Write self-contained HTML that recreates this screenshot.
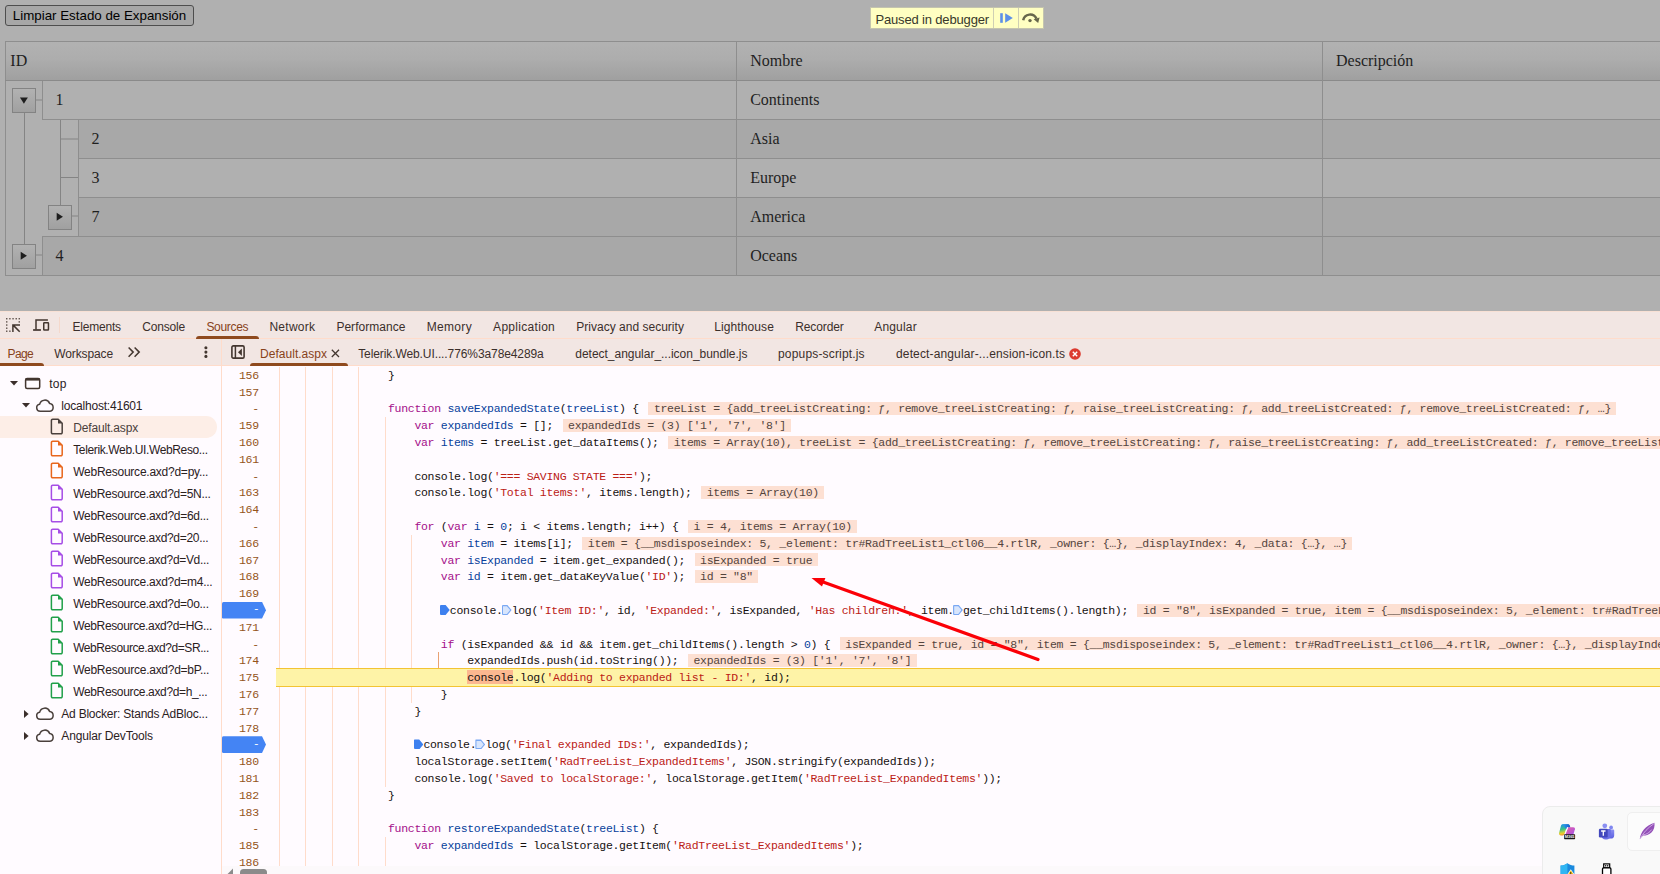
<!DOCTYPE html>
<html lang="es"><head><meta charset="utf-8"><title>Default.aspx - DevTools</title>
<style>
*{box-sizing:border-box}
html,body{margin:0;padding:0}
body{width:1660px;height:874px;overflow:hidden;position:relative;background:#b0b0b0;font-family:"Liberation Sans",sans-serif}
.a{position:absolute;display:block}
.t{position:absolute;white-space:pre;line-height:16px;height:16px}
#page{position:absolute;left:0;top:0;width:1660px;height:311px;background:#b0b0b0;overflow:hidden}
#btn{position:absolute;left:5px;top:5px;width:189px;height:21px;border:1px solid #4e4e4e;border-radius:3px;background:#a7a7a7;color:#000;font:13.333px "Liberation Sans",sans-serif;line-height:19px;text-align:center;white-space:nowrap}
.c{position:absolute;white-space:pre;line-height:18px;font:16px "Liberation Serif",serif;color:#1f1f1f}
.eb{position:absolute;width:24px;height:25px;border:1px solid #838383;background:linear-gradient(#b2b2b2,#a0a0a0)}
#badge{position:absolute;left:870px;top:7px;width:174px;height:22px;background:#ffffc2;border:1px solid #c4c4ae}
#dt{position:absolute;left:0;top:311px;width:1660px;height:563px;background:#fffbff}
.bar{position:absolute;left:0;width:1660px;background:#f2e6e3;border-bottom:1px solid #ffdccb}
.ul{position:absolute;height:3px;background:#8f4a1e;border-radius:3px 3px 0 0}
#side{position:absolute;left:0;top:366px;width:221px;height:508px;background:#fffbff}
#ed{position:absolute;left:222px;top:366px;width:1438px;height:508px;background:#fffbff;overflow:hidden}
.ln{position:absolute;left:222px;width:36.8px;text-align:right;font:11.5px "Liberation Mono",monospace;letter-spacing:-0.3px;line-height:16.8px;height:16.8px;color:#94541a;white-space:pre}
.cl{position:absolute;left:282.4px;font:11.5px "Liberation Mono",monospace;letter-spacing:-0.3px;line-height:16.8px;height:16.8px;color:#15100f;white-space:pre}
.k{color:#a40f8a}.d{color:#073f9c}.s{color:#bb2016}.n{color:#073f9c}
.v{color:#54443d;margin-left:9.6px;padding:0 5.4px}.vb{position:absolute;height:13.1px;background:#fde0d3}.hb{position:absolute;height:13.6px;background:#fcb890}

.exec{position:absolute;left:276px;width:1400px;height:19px;background:#fef3a7;border-top:1px solid #f3c433;border-bottom:1px solid #f3c433}
.g{position:absolute;width:1px;background:#ffdccb}.ga{background:#e9a273}
.bpm{position:absolute;left:222px;width:44px;height:16.8px;background:#4484f4;border-radius:1.5px;clip-path:polygon(0 0,40px 0,44px 50%,40px 100%,0 100%);color:#fff;font:11px "Liberation Mono",monospace;line-height:15.6px}
.bpm span{position:absolute;right:6.4px;top:0.4px}
.b1,.b2{display:inline-block;width:9px;height:10px;vertical-align:top;margin-top:2.1px;position:relative}
.b1:before,.b2:before{content:"";position:absolute;left:-0.9px;top:0;width:9.8px;height:10px;clip-path:polygon(0 0,58% 0,100% 50%,58% 100%,0 100%);background:#3d80ef;border-radius:1px}
.b2:before{background:#7aa8f3}
.b2:after{content:"";position:absolute;left:0.2px;top:1.1px;width:7.3px;height:7.8px;clip-path:polygon(0 0,56% 0,100% 50%,56% 100%,0 100%);background:#d8e5fc}
</style></head><body>
<div id="page">
<div id="btn">Limpiar Estado de Expansión</div>
<div class="a" style="left:5px;top:41px;width:1655px;height:40px;background:linear-gradient(#b2b2b2 0%,#adadad 45%,#9f9f9f 100%);"></div>
<div class="a" style="left:79px;top:120px;width:1581px;height:39px;background:#a8a8a8;"></div>
<div class="a" style="left:79px;top:198px;width:1581px;height:39px;background:#a8a8a8;"></div>
<div class="a" style="left:43px;top:237px;width:1617px;height:39px;background:#a8a8a8;"></div>
<div class="a" style="left:5px;top:41px;width:1655px;height:1px;background:#8e8e8e;"></div>
<div class="a" style="left:5px;top:41px;width:1px;height:235px;background:#8e8e8e;"></div>
<div class="a" style="left:5px;top:275px;width:1655px;height:1px;background:#8e8e8e;"></div>
<div class="a" style="left:5px;top:80px;width:1655px;height:1px;background:#8a8a8a;"></div>
<div class="a" style="left:42px;top:119px;width:1618px;height:1px;background:#8e8e8e;"></div>
<div class="a" style="left:78px;top:158px;width:1582px;height:1px;background:#8e8e8e;"></div>
<div class="a" style="left:78px;top:197px;width:1582px;height:1px;background:#8e8e8e;"></div>
<div class="a" style="left:42px;top:236px;width:1618px;height:1px;background:#8e8e8e;"></div>
<div class="a" style="left:42px;top:81px;width:1px;height:39px;background:#8e8e8e;"></div>
<div class="a" style="left:78px;top:120px;width:1px;height:117px;background:#8e8e8e;"></div>
<div class="a" style="left:42px;top:237px;width:1px;height:39px;background:#8e8e8e;"></div>
<div class="a" style="left:736px;top:42px;width:1px;height:234px;background:#8e8e8e;"></div>
<div class="a" style="left:1322px;top:42px;width:1px;height:234px;background:#8e8e8e;"></div>
<div class="a" style="left:24px;top:113px;width:1px;height:132px;background:#848484;"></div>
<div class="a" style="left:60px;top:120px;width:1px;height:86px;background:#848484;"></div>
<div class="a" style="left:36px;top:99px;width:6px;height:2px;background:#9a9a9a;"></div>
<div class="a" style="left:61px;top:138px;width:17px;height:2px;background:#9a9a9a;"></div>
<div class="a" style="left:61px;top:177px;width:17px;height:1px;background:#848484;"></div>
<div class="a" style="left:72px;top:215px;width:6px;height:2px;background:#9a9a9a;"></div>
<div class="a" style="left:36px;top:254px;width:6px;height:2px;background:#9a9a9a;"></div>
<div class="eb" style="left:12px;top:88px"><svg width="22" height="22" viewBox="0 0 24 24" style="position:absolute;left:0;top:0"><path d="M7.6 9.4h8.6l-4.3 6.6z" fill="#1e1e1e"/></svg></div>
<div class="eb" style="left:48px;top:205px"><svg width="22" height="22" viewBox="0 0 24 24" style="position:absolute;left:0;top:0"><path d="M8.4 7.4v8.8l6.8-4.4z" fill="#1e1e1e"/></svg></div>
<div class="eb" style="left:12px;top:244px"><svg width="22" height="22" viewBox="0 0 24 24" style="position:absolute;left:0;top:0"><path d="M8.4 7.4v8.8l6.8-4.4z" fill="#1e1e1e"/></svg></div>
<span class="c" style="left:10.3px;top:51.7px">ID</span>
<span class="c" style="left:750.2px;top:51.7px">Nombre</span>
<span class="c" style="left:1336px;top:51.7px">Descripción</span>
<span class="c" style="left:55.5px;top:90.5px">1</span>
<span class="c" style="left:750.2px;top:90.5px">Continents</span>
<span class="c" style="left:91.5px;top:129.5px">2</span>
<span class="c" style="left:750.2px;top:129.5px">Asia</span>
<span class="c" style="left:91.5px;top:168.5px">3</span>
<span class="c" style="left:750.2px;top:168.5px">Europe</span>
<span class="c" style="left:91.5px;top:207.5px">7</span>
<span class="c" style="left:750.2px;top:207.5px">America</span>
<span class="c" style="left:55.5px;top:246.5px">4</span>
<span class="c" style="left:750.2px;top:246.5px">Oceans</span>
<div id="badge"><div class="a" style="left:122px;top:0;width:1px;height:20px;background:#cfcfb4"></div><div class="a" style="left:147px;top:0;width:1px;height:20px;background:#cfcfb4"></div>
<svg class="a" style="left:127.6px;top:3.6px" width="16" height="12" viewBox="0 0 16 12"><rect x="1.2" y="1.2" width="2.6" height="9.6" fill="#5b8fe8"/><path d="M6.2 1.2v9.6l7.6-4.8z" fill="#5b8fe8"/></svg>
<svg class="a" style="left:150px;top:3.8px" width="20" height="12" viewBox="0 0 20 12"><path d="M2.2 8.2a7 7 0 0 1 13.2-1.6" fill="none" stroke="#67674c" stroke-width="2.5"/><path d="M12.6 7.2l6-1.6-1.4 5.4z" fill="#67674c"/><circle cx="9" cy="8.6" r="1.7" fill="#67674c"/></svg></div>
</div>
<div id="dt">
<div class="bar" style="top:0;height:28px;border-top:1px solid #f8e0d4"></div>
<div class="bar" style="top:28px;height:27px"></div>
</div>
<div id="side"></div>
<div id="ed"></div>
<svg class="a" style="left:0;top:312px" width="60" height="26" viewBox="0 312 60 26"><g fill="#43362f"><rect x="6.10" y="318.1" width="1.3" height="1.3"/><rect x="9.25" y="318.1" width="1.3" height="1.3"/><rect x="12.40" y="318.1" width="1.3" height="1.3"/><rect x="15.55" y="318.1" width="1.3" height="1.3"/><rect x="18.60" y="318.1" width="1.3" height="1.3"/><rect x="6.1" y="321.25" width="1.3" height="1.3"/><rect x="6.1" y="324.40" width="1.3" height="1.3"/><rect x="6.1" y="327.55" width="1.3" height="1.3"/><rect x="6.1" y="330.55" width="1.3" height="1.3"/><rect x="18.6" y="321.25" width="1.3" height="1.3"/><rect x="9.25" y="330.55" width="1.3" height="1.3"/></g><path d="M20 324.9H12.9V331.9M12.9 324.9l6.8 6.8" fill="none" stroke="#43362f" stroke-width="1.5"/><path d="M47.9 319.9H36V329.4" fill="none" stroke="#43362f" stroke-width="1.5"/><path d="M33.1 330H40.9" stroke="#43362f" stroke-width="1.7"/><rect x="43.75" y="322.85" width="4.7" height="7.2" rx="0.5" fill="none" stroke="#43362f" stroke-width="1.5"/></svg>
<div class="a" style="left:59px;top:317px;width:1px;height:16px;background:#f5d9cc"></div>
<div class="ul" style="left:196px;top:336px;width:62.5px"></div>
<div class="ul" style="left:0;top:363px;width:44px;border-radius:0 3px 0 0"></div>
<div class="ul" style="left:250px;top:363px;width:98px"></div>
<svg class="a" style="left:127px;top:346px" width="15" height="12" viewBox="127 346 15 12"><path d="M128.6 347.5l4.6 4.6-4.6 4.6M134.6 347.5l4.6 4.6-4.6 4.6" fill="none" stroke="#43362f" stroke-width="1.5"/></svg>
<svg class="a" style="left:203px;top:345px" width="6" height="14" viewBox="203 345 6 14"><g fill="#43362f"><circle cx="205.9" cy="347.8" r="1.55"/><circle cx="205.9" cy="352.1" r="1.55"/><circle cx="205.9" cy="356.4" r="1.55"/></g></svg>
<div class="a" style="left:221px;top:339px;width:1px;height:535px;background:#ffdccb"></div>
<svg class="a" style="left:231px;top:345px" width="14" height="14" viewBox="0 0 14 14"><rect x="0.9" y="0.9" width="12.2" height="12.2" rx="1.4" fill="none" stroke="#43362f" stroke-width="1.6"/><path d="M4.4 0.9v12.2" stroke="#43362f" stroke-width="1.5"/><path d="M10.9 3.5v7.4L7 7.2z" fill="#43362f"/></svg>
<svg class="a" style="left:330.7px;top:348.6px" width="9" height="9" viewBox="0 0 9 9"><path d="M0.8 0.8l7.2 7.2M8 0.8L0.8 8" stroke="#43362f" stroke-width="1.25"/></svg>
<svg class="a" style="left:1069.2px;top:348px" width="12" height="12" viewBox="0 0 12 12"><circle cx="6" cy="6" r="5.8" fill="#dc3a2f"/><path d="M3.8 3.8l4.4 4.4M8.2 3.8L3.8 8.2" stroke="#fff" stroke-width="1.4"/></svg>
<div class="a" style="left:0;top:416px;width:216.5px;height:21.5px;background:#fdeee7;border-radius:0 10.75px 10.75px 0"></div>
<div class="g" style="left:279px;top:366.6px;height:499.4px"></div>
<div class="g" style="left:305px;top:366.6px;height:499.4px"></div>
<div class="g" style="left:332px;top:366.6px;height:499.4px"></div>
<div class="g" style="left:358px;top:366.6px;height:499.4px"></div>
<div class="g" style="left:385px;top:417.0px;height:369.6px"></div>
<div class="g" style="left:385px;top:837.0px;height:29.0px"></div>
<div class="g" style="left:411px;top:534.6px;height:168.0px"></div>
<div class="g ga" style="left:438px;top:652.2px;height:16.8px"></div>
<div class="a" style="left:222px;top:866px;width:1438px;height:8px;background:#fcf9fb"></div>
<svg class="a" style="left:226px;top:868px" width="8" height="6" viewBox="0 0 8 6"><path d="M7 0.4v6H1.2z" fill="#8b8b8b"/></svg>
<div class="a" style="left:240px;top:869px;width:27px;height:8px;background:#8b8b8b;border-radius:3.5px"></div>
<svg class="a" style="left:10.3px;top:381.0px" width="8" height="5" viewBox="0 0 8 5"><path d="M0 0h8L4 4.6z" fill="#3b2f2b"/></svg>
<svg class="a" style="left:24.4px;top:376.9px" width="18" height="13" viewBox="0 0 18 13"><rect x="1.6" y="1.6" width="14.1" height="10" rx="1.5" fill="none" stroke="#43362f" stroke-width="1.5"/><rect x="1.6" y="1.4" width="14.1" height="2.2" fill="#43362f"/></svg>
<svg class="a" style="left:22.4px;top:403.0px" width="8" height="5" viewBox="0 0 8 5"><path d="M0 0h8L4 4.6z" fill="#3b2f2b"/></svg>
<svg class="a" style="left:34.6px;top:398.5px" width="20" height="14" viewBox="0 0 20 14"><path d="M5.2 12.3a3.6 3.6 0 0 1-.5-7.15A5.2 5.2 0 0 1 14.6 4.4a4 4 0 0 1 .3 7.9z" fill="none" stroke="#4a403c" stroke-width="1.5" stroke-linejoin="round"/></svg>
<svg class="a" style="left:50px;top:418.1px" width="14" height="17" viewBox="0 0 14 17"><path d="M2.6 1.3h5.6l4 4v9.3a1.2 1.2 0 0 1-1.2 1.2H2.6a1.2 1.2 0 0 1-1.2-1.2V2.5a1.2 1.2 0 0 1 1.2-1.2z" fill="none" stroke="#4a403c" stroke-width="1.5" stroke-linejoin="round"/><path d="M8 1.3v4.2h4.2z" fill="#4a403c"/></svg>
<svg class="a" style="left:50px;top:440.1px" width="14" height="17" viewBox="0 0 14 17"><path d="M2.6 1.3h5.6l4 4v9.3a1.2 1.2 0 0 1-1.2 1.2H2.6a1.2 1.2 0 0 1-1.2-1.2V2.5a1.2 1.2 0 0 1 1.2-1.2z" fill="none" stroke="#e8661c" stroke-width="1.5" stroke-linejoin="round"/><path d="M8 1.3v4.2h4.2z" fill="#e8661c"/></svg>
<svg class="a" style="left:50px;top:462.1px" width="14" height="17" viewBox="0 0 14 17"><path d="M2.6 1.3h5.6l4 4v9.3a1.2 1.2 0 0 1-1.2 1.2H2.6a1.2 1.2 0 0 1-1.2-1.2V2.5a1.2 1.2 0 0 1 1.2-1.2z" fill="none" stroke="#e8661c" stroke-width="1.5" stroke-linejoin="round"/><path d="M8 1.3v4.2h4.2z" fill="#e8661c"/></svg>
<svg class="a" style="left:50px;top:484.1px" width="14" height="17" viewBox="0 0 14 17"><path d="M2.6 1.3h5.6l4 4v9.3a1.2 1.2 0 0 1-1.2 1.2H2.6a1.2 1.2 0 0 1-1.2-1.2V2.5a1.2 1.2 0 0 1 1.2-1.2z" fill="none" stroke="#a64de6" stroke-width="1.5" stroke-linejoin="round"/><path d="M8 1.3v4.2h4.2z" fill="#a64de6"/></svg>
<svg class="a" style="left:50px;top:506.1px" width="14" height="17" viewBox="0 0 14 17"><path d="M2.6 1.3h5.6l4 4v9.3a1.2 1.2 0 0 1-1.2 1.2H2.6a1.2 1.2 0 0 1-1.2-1.2V2.5a1.2 1.2 0 0 1 1.2-1.2z" fill="none" stroke="#a64de6" stroke-width="1.5" stroke-linejoin="round"/><path d="M8 1.3v4.2h4.2z" fill="#a64de6"/></svg>
<svg class="a" style="left:50px;top:528.1px" width="14" height="17" viewBox="0 0 14 17"><path d="M2.6 1.3h5.6l4 4v9.3a1.2 1.2 0 0 1-1.2 1.2H2.6a1.2 1.2 0 0 1-1.2-1.2V2.5a1.2 1.2 0 0 1 1.2-1.2z" fill="none" stroke="#a64de6" stroke-width="1.5" stroke-linejoin="round"/><path d="M8 1.3v4.2h4.2z" fill="#a64de6"/></svg>
<svg class="a" style="left:50px;top:550.1px" width="14" height="17" viewBox="0 0 14 17"><path d="M2.6 1.3h5.6l4 4v9.3a1.2 1.2 0 0 1-1.2 1.2H2.6a1.2 1.2 0 0 1-1.2-1.2V2.5a1.2 1.2 0 0 1 1.2-1.2z" fill="none" stroke="#a64de6" stroke-width="1.5" stroke-linejoin="round"/><path d="M8 1.3v4.2h4.2z" fill="#a64de6"/></svg>
<svg class="a" style="left:50px;top:572.1px" width="14" height="17" viewBox="0 0 14 17"><path d="M2.6 1.3h5.6l4 4v9.3a1.2 1.2 0 0 1-1.2 1.2H2.6a1.2 1.2 0 0 1-1.2-1.2V2.5a1.2 1.2 0 0 1 1.2-1.2z" fill="none" stroke="#a64de6" stroke-width="1.5" stroke-linejoin="round"/><path d="M8 1.3v4.2h4.2z" fill="#a64de6"/></svg>
<svg class="a" style="left:50px;top:594.1px" width="14" height="17" viewBox="0 0 14 17"><path d="M2.6 1.3h5.6l4 4v9.3a1.2 1.2 0 0 1-1.2 1.2H2.6a1.2 1.2 0 0 1-1.2-1.2V2.5a1.2 1.2 0 0 1 1.2-1.2z" fill="none" stroke="#21a04a" stroke-width="1.5" stroke-linejoin="round"/><path d="M8 1.3v4.2h4.2z" fill="#21a04a"/></svg>
<svg class="a" style="left:50px;top:616.1px" width="14" height="17" viewBox="0 0 14 17"><path d="M2.6 1.3h5.6l4 4v9.3a1.2 1.2 0 0 1-1.2 1.2H2.6a1.2 1.2 0 0 1-1.2-1.2V2.5a1.2 1.2 0 0 1 1.2-1.2z" fill="none" stroke="#21a04a" stroke-width="1.5" stroke-linejoin="round"/><path d="M8 1.3v4.2h4.2z" fill="#21a04a"/></svg>
<svg class="a" style="left:50px;top:638.1px" width="14" height="17" viewBox="0 0 14 17"><path d="M2.6 1.3h5.6l4 4v9.3a1.2 1.2 0 0 1-1.2 1.2H2.6a1.2 1.2 0 0 1-1.2-1.2V2.5a1.2 1.2 0 0 1 1.2-1.2z" fill="none" stroke="#21a04a" stroke-width="1.5" stroke-linejoin="round"/><path d="M8 1.3v4.2h4.2z" fill="#21a04a"/></svg>
<svg class="a" style="left:50px;top:660.1px" width="14" height="17" viewBox="0 0 14 17"><path d="M2.6 1.3h5.6l4 4v9.3a1.2 1.2 0 0 1-1.2 1.2H2.6a1.2 1.2 0 0 1-1.2-1.2V2.5a1.2 1.2 0 0 1 1.2-1.2z" fill="none" stroke="#21a04a" stroke-width="1.5" stroke-linejoin="round"/><path d="M8 1.3v4.2h4.2z" fill="#21a04a"/></svg>
<svg class="a" style="left:50px;top:682.1px" width="14" height="17" viewBox="0 0 14 17"><path d="M2.6 1.3h5.6l4 4v9.3a1.2 1.2 0 0 1-1.2 1.2H2.6a1.2 1.2 0 0 1-1.2-1.2V2.5a1.2 1.2 0 0 1 1.2-1.2z" fill="none" stroke="#21a04a" stroke-width="1.5" stroke-linejoin="round"/><path d="M8 1.3v4.2h4.2z" fill="#21a04a"/></svg>
<svg class="a" style="left:24px;top:709.5px" width="5" height="8" viewBox="0 0 5 8"><path d="M0 0v8L4.6 4z" fill="#3b2f2b"/></svg>
<svg class="a" style="left:34.6px;top:706.5px" width="20" height="14" viewBox="0 0 20 14"><path d="M5.2 12.3a3.6 3.6 0 0 1-.5-7.15A5.2 5.2 0 0 1 14.6 4.4a4 4 0 0 1 .3 7.9z" fill="none" stroke="#4a403c" stroke-width="1.5" stroke-linejoin="round"/></svg>
<svg class="a" style="left:24px;top:731.5px" width="5" height="8" viewBox="0 0 5 8"><path d="M0 0v8L4.6 4z" fill="#3b2f2b"/></svg>
<svg class="a" style="left:34.6px;top:728.5px" width="20" height="14" viewBox="0 0 20 14"><path d="M5.2 12.3a3.6 3.6 0 0 1-.5-7.15A5.2 5.2 0 0 1 14.6 4.4a4 4 0 0 1 .3 7.9z" fill="none" stroke="#4a403c" stroke-width="1.5" stroke-linejoin="round"/></svg>
<div class="ln" style="top:367.8px">156</div>
<div class="cl" style="top:367.8px">                }</div>
<div class="ln" style="top:384.6px">157</div>
<div class="ln" style="top:401.4px">-</div>
<div class="vb" style="left:648.4px;top:402.2px;width:967.8px"></div>
<div class="cl" style="top:401.4px">                <span class="k">function</span> <span class="d">saveExpandedState</span>(<span class="d">treeList</span>) {<span class="v">treeList = {add_treeListCreating: ƒ, remove_treeListCreating: ƒ, raise_treeListCreating: ƒ, add_treeListCreated: ƒ, remove_treeListCreated: ƒ, …}</span></div>
<div class="ln" style="top:418.1px">159</div>
<div class="vb" style="left:562.6px;top:419.0px;width:228.6px"></div>
<div class="cl" style="top:418.1px">                    <span class="k">var</span> <span class="d">expandedIds</span> = [];<span class="v">expandedIds = (3) ['1', '7', '8']</span></div>
<div class="ln" style="top:434.9px">160</div>
<div class="vb" style="left:668.2px;top:435.8px;width:1093.2px"></div>
<div class="cl" style="top:434.9px">                    <span class="k">var</span> <span class="d">items</span> = treeList.get_dataItems();<span class="v">items = Array(10), treeList = {add_treeListCreating: ƒ, remove_treeListCreating: ƒ, raise_treeListCreating: ƒ, add_treeListCreated: ƒ, remove_treeListCreated: ƒ, …}</span></div>
<div class="ln" style="top:451.8px">161</div>
<div class="ln" style="top:468.6px">-</div>
<div class="cl" style="top:468.6px">                    console.log(<span class="s">'=== SAVING STATE ==='</span>);</div>
<div class="ln" style="top:485.4px">163</div>
<div class="vb" style="left:701.2px;top:486.2px;width:123.0px"></div>
<div class="cl" style="top:485.4px">                    console.log(<span class="s">'Total items:'</span>, items.length);<span class="v">items = Array(10)</span></div>
<div class="ln" style="top:502.1px">164</div>
<div class="ln" style="top:519.0px">-</div>
<div class="vb" style="left:688.0px;top:519.8px;width:169.2px"></div>
<div class="cl" style="top:519.0px">                    <span class="k">for</span> (<span class="k">var</span> <span class="d">i</span> = <span class="n">0</span>; i &lt; items.length; i++) {<span class="v">i = 4, items = Array(10)</span></div>
<div class="ln" style="top:535.8px">166</div>
<div class="vb" style="left:582.4px;top:536.6px;width:769.8px"></div>
<div class="cl" style="top:535.8px">                        <span class="k">var</span> <span class="d">item</span> = items[i];<span class="v">item = {__msdisposeindex: 5, _element: tr#RadTreeList1_ctl06__4.rtlR, _owner: {…}, _displayIndex: 4, _data: {…}, …}</span></div>
<div class="ln" style="top:552.5px">167</div>
<div class="vb" style="left:694.6px;top:553.4px;width:123.0px"></div>
<div class="cl" style="top:552.5px">                        <span class="k">var</span> <span class="d">isExpanded</span> = item.get_expanded();<span class="v">isExpanded = true</span></div>
<div class="ln" style="top:569.4px">168</div>
<div class="vb" style="left:694.6px;top:570.2px;width:63.6px"></div>
<div class="cl" style="top:569.4px">                        <span class="k">var</span> <span class="d">id</span> = item.get_dataKeyValue(<span class="s">'ID'</span>);<span class="v">id = "8"</span></div>
<div class="ln" style="top:586.1px">169</div>
<div class="bpm" style="top:601.8px"><span>-</span></div>
<div class="vb" style="left:1137.4px;top:603.8px;width:961.2px"></div>
<div class="cl" style="top:603.0px">                        <i class="b1"></i>console.<i class="b2"></i>log(<span class="s">'Item ID:'</span>, id, <span class="s">'Expanded:'</span>, isExpanded, <span class="s">'Has children:'</span>, item.<i class="b2"></i>get_childItems().length);<span class="v">id = "8", isExpanded = true, item = {__msdisposeindex: 5, _element: tr#RadTreeList1_ctl06__4.rtlR, _owner: {…}, _displayIndex: 4, _data: {…}, …}</span></div>
<div class="ln" style="top:619.8px">171</div>
<div class="ln" style="top:636.5px">-</div>
<div class="vb" style="left:839.8px;top:637.4px;width:961.2px"></div>
<div class="cl" style="top:636.5px">                        <span class="k">if</span> (isExpanded &amp;&amp; id &amp;&amp; item.get_childItems().length &gt; <span class="n">0</span>) {<span class="v">isExpanded = true, id = "8", item = {__msdisposeindex: 5, _element: tr#RadTreeList1_ctl06__4.rtlR, _owner: {…}, _displayIndex: 4, _data: {…}, …}</span></div>
<div class="ln" style="top:653.4px">174</div>
<div class="vb" style="left:688.0px;top:654.2px;width:228.6px"></div>
<div class="cl" style="top:653.4px">                            expandedIds.push(id.toString());<span class="v">expandedIds = (3) ['1', '7', '8']</span></div>
<div class="ln" style="top:670.2px">175</div>
<div class="exec" style="top:668px"></div>
<div class="hb" style="left:467.2px;top:670.2px;width:46.2px"></div>
<div class="cl" style="top:670.2px">                            console.log(<span class="s">'Adding to expanded list - ID:'</span>, id);</div>
<div class="ln" style="top:687.0px">176</div>
<div class="cl" style="top:687.0px">                        }</div>
<div class="ln" style="top:703.8px">177</div>
<div class="cl" style="top:703.8px">                    }</div>
<div class="ln" style="top:720.5px">178</div>
<div class="bpm" style="top:736.2px"><span>-</span></div>
<div class="cl" style="top:737.4px">                    <i class="b1"></i>console.<i class="b2"></i>log(<span class="s">'Final expanded IDs:'</span>, expandedIds);</div>
<div class="ln" style="top:754.2px">180</div>
<div class="cl" style="top:754.2px">                    localStorage.setItem(<span class="s">'RadTreeList_ExpandedItems'</span>, JSON.stringify(expandedIds));</div>
<div class="ln" style="top:771.0px">181</div>
<div class="cl" style="top:771.0px">                    console.log(<span class="s">'Saved to localStorage:'</span>, localStorage.getItem(<span class="s">'RadTreeList_ExpandedItems'</span>));</div>
<div class="ln" style="top:787.8px">182</div>
<div class="cl" style="top:787.8px">                }</div>
<div class="ln" style="top:804.5px">183</div>
<div class="ln" style="top:821.4px">-</div>
<div class="cl" style="top:821.4px">                <span class="k">function</span> <span class="d">restoreExpandedState</span>(<span class="d">treeList</span>) {</div>
<div class="ln" style="top:838.2px">185</div>
<div class="cl" style="top:838.2px">                    <span class="k">var</span> <span class="d">expandedIds</span> = localStorage.getItem(<span class="s">'RadTreeList_ExpandedItems'</span>);</div>
<div class="ln" style="top:855.0px">186</div>
<span class="t " style="left:72.4px;top:319.6px;color:#3b2f2b;font:12px 'Liberation Sans',sans-serif;letter-spacing:-0.191px">Elements</span>
<span class="t " style="left:142.2px;top:319.6px;color:#3b2f2b;font:12px 'Liberation Sans',sans-serif;letter-spacing:-0.162px">Console</span>
<span class="t " style="left:206.4px;top:319.6px;color:#87421a;font:12px 'Liberation Sans',sans-serif;letter-spacing:-0.319px">Sources</span>
<span class="t " style="left:269.4px;top:319.6px;color:#3b2f2b;font:12px 'Liberation Sans',sans-serif;letter-spacing:0.283px">Network</span>
<span class="t " style="left:336.4px;top:319.6px;color:#3b2f2b;font:12px 'Liberation Sans',sans-serif;letter-spacing:0.027px">Performance</span>
<span class="t " style="left:426.7px;top:319.6px;color:#3b2f2b;font:12px 'Liberation Sans',sans-serif;letter-spacing:0.326px">Memory</span>
<span class="t " style="left:493.1px;top:319.6px;color:#3b2f2b;font:12px 'Liberation Sans',sans-serif;letter-spacing:0.298px">Application</span>
<span class="t " style="left:576.3px;top:319.6px;color:#3b2f2b;font:12px 'Liberation Sans',sans-serif;letter-spacing:0.011px">Privacy and security</span>
<span class="t " style="left:714.2px;top:319.6px;color:#3b2f2b;font:12px 'Liberation Sans',sans-serif;letter-spacing:0.108px">Lighthouse</span>
<span class="t " style="left:795.2px;top:319.6px;color:#3b2f2b;font:12px 'Liberation Sans',sans-serif;letter-spacing:-0.107px">Recorder</span>
<span class="t " style="left:874.2px;top:319.6px;color:#3b2f2b;font:12px 'Liberation Sans',sans-serif;letter-spacing:0.189px">Angular</span>
<span class="t " style="left:7.5px;top:347.3px;color:#87421a;font:12px 'Liberation Sans',sans-serif;letter-spacing:-0.583px">Page</span>
<span class="t " style="left:54.3px;top:347.3px;color:#3b2f2b;font:12px 'Liberation Sans',sans-serif;letter-spacing:-0.124px">Workspace</span>
<span class="t " style="left:260.1px;top:347.3px;color:#87421a;font:12px 'Liberation Sans',sans-serif;letter-spacing:0.016px">Default.aspx</span>
<span class="t " style="left:358.2px;top:347.3px;color:#3b2f2b;font:12px 'Liberation Sans',sans-serif;letter-spacing:-0.096px">Telerik.Web.UI....776%3a78e4289a</span>
<span class="t " style="left:575.3px;top:347.3px;color:#3b2f2b;font:12px 'Liberation Sans',sans-serif;letter-spacing:-0.022px">detect_angular_...icon_bundle.js</span>
<span class="t " style="left:778.0px;top:347.3px;color:#3b2f2b;font:12px 'Liberation Sans',sans-serif;letter-spacing:0.172px">popups-script.js</span>
<span class="t " style="left:896.0px;top:347.3px;color:#3b2f2b;font:12px 'Liberation Sans',sans-serif;letter-spacing:0.139px">detect-angular-...ension-icon.ts</span>
<span class="t " style="left:49.2px;top:377.2px;color:#2b211e;font:12px 'Liberation Sans',sans-serif;letter-spacing:0.304px">top</span>
<span class="t " style="left:61.3px;top:399.2px;color:#2b211e;font:12px 'Liberation Sans',sans-serif;letter-spacing:-0.205px">localhost:41601</span>
<span class="t " style="left:73.2px;top:421.2px;color:#4a403c;font:12px 'Liberation Sans',sans-serif;letter-spacing:-0.159px">Default.aspx</span>
<span class="t " style="left:73.2px;top:443.2px;color:#2b211e;font:12px 'Liberation Sans',sans-serif;letter-spacing:-0.360px">Telerik.Web.UI.WebReso...</span>
<span class="t " style="left:73.2px;top:465.2px;color:#2b211e;font:12px 'Liberation Sans',sans-serif;letter-spacing:-0.245px">WebResource.axd?d=py...</span>
<span class="t " style="left:73.2px;top:487.2px;color:#2b211e;font:12px 'Liberation Sans',sans-serif;letter-spacing:-0.300px">WebResource.axd?d=5N...</span>
<span class="t " style="left:73.2px;top:509.2px;color:#2b211e;font:12px 'Liberation Sans',sans-serif;letter-spacing:-0.283px">WebResource.axd?d=6d...</span>
<span class="t " style="left:73.2px;top:531.2px;color:#2b211e;font:12px 'Liberation Sans',sans-serif;letter-spacing:-0.313px">WebResource.axd?d=20...</span>
<span class="t " style="left:73.2px;top:553.2px;color:#2b211e;font:12px 'Liberation Sans',sans-serif;letter-spacing:-0.340px">WebResource.axd?d=Vd...</span>
<span class="t " style="left:73.2px;top:575.2px;color:#2b211e;font:12px 'Liberation Sans',sans-serif;letter-spacing:-0.275px">WebResource.axd?d=m4...</span>
<span class="t " style="left:73.2px;top:597.2px;color:#2b211e;font:12px 'Liberation Sans',sans-serif;letter-spacing:-0.291px">WebResource.axd?d=0o...</span>
<span class="t " style="left:73.2px;top:619.2px;color:#2b211e;font:12px 'Liberation Sans',sans-serif;letter-spacing:-0.355px">WebResource.axd?d=HG...</span>
<span class="t " style="left:73.2px;top:641.2px;color:#2b211e;font:12px 'Liberation Sans',sans-serif;letter-spacing:-0.427px">WebResource.axd?d=SR...</span>
<span class="t " style="left:73.2px;top:663.2px;color:#2b211e;font:12px 'Liberation Sans',sans-serif;letter-spacing:-0.260px">WebResource.axd?d=bP...</span>
<span class="t " style="left:73.2px;top:685.2px;color:#2b211e;font:12px 'Liberation Sans',sans-serif;letter-spacing:-0.352px">WebResource.axd?d=h_...</span>
<span class="t " style="left:61.3px;top:707.2px;color:#2b211e;font:12px 'Liberation Sans',sans-serif;letter-spacing:-0.223px">Ad Blocker: Stands AdBloc...</span>
<span class="t " style="left:61.3px;top:729.2px;color:#2b211e;font:12px 'Liberation Sans',sans-serif;letter-spacing:-0.154px">Angular DevTools</span>
<span class="t " style="left:875.4px;top:11.8px;color:#38382a;font:13px 'Liberation Sans',sans-serif;letter-spacing:-0.154px">Paused in debugger</span>
<svg class="a" style="left:800px;top:570px" width="250" height="100" viewBox="800 570 250 100"><path d="M1038 659.5L821 581.3" stroke="#fb0007" stroke-width="3.2" stroke-linecap="round" fill="none"/><path d="M811.5 577.9L825.4 577.9L822 586.6z" fill="#fb0007"/></svg>
<div class="a" style="left:1542px;top:806px;width:140px;height:90px;background:#f9f9f9;border:1px solid #ececec;border-radius:8px"></div>
<div class="a" style="left:1627.3px;top:811.5px;width:60px;height:39px;background:#fcfcfc;border:1px solid #efefef;border-radius:5px"></div>
<svg class="a" style="left:1558px;top:823px" width="18" height="17" viewBox="0 0 18 17"><defs><linearGradient id="cg1" x1="0.2" y1="0" x2="0.4" y2="1"><stop offset="0" stop-color="#1d8fe8"/><stop offset="0.45" stop-color="#38c28a"/><stop offset="0.8" stop-color="#e8d22c"/><stop offset="1" stop-color="#f08a2c"/></linearGradient><linearGradient id="cg2" x1="0" y1="0" x2="1" y2="1"><stop offset="0" stop-color="#f0609e"/><stop offset="1" stop-color="#9a52f0"/></linearGradient><linearGradient id="cg3" x1="0" y1="0" x2="1" y2="0"><stop offset="0" stop-color="#2aa4f0"/><stop offset="1" stop-color="#1a56c8"/></linearGradient></defs><path d="M4.6 1.2h4.8c1 0 1.6.5 1.9 1.4l.5 1.6H8.6L6.6 11c-.3.9-.9 1.4-1.9 1.4H3C1.7 12.400000000000001.7 11.4 1 10.200000000000001L2.9 3C3.2 1.8 3.8 1.2 4.6 1.2z" fill="url(#cg1)"/><path d="M4.4 1.2h5.400000000000001c1 0 1.7.5 2 1.4l.6 1.8H9.4L8.6 6.8 6.4 4C5.800000000000001 2.6 5.2 1.8 4.4 1.2z" fill="url(#cg3)"/><path d="M10.4 4.2h4.8c1.3 0 2 .9 1.7 2.1l-1.5 5.3c-.3 1-.9 1.5-1.9 1.5H9c-1 0-1.6-.5-1.9-1.4l-.3-1z" fill="url(#cg2)"/><path d="M9.6 4.2L6.6 12.4" stroke="#fff" stroke-width="1.1"/><rect x="6.1" y="11.3" width="11" height="5" rx="0.7" fill="#161616"/><text x="6.7" y="15.4" font-family="Liberation Sans, sans-serif" font-size="4.4" font-weight="700" fill="#fff" textLength="9.8" lengthAdjust="spacingAndGlyphs">M365</text></svg>
<svg class="a" style="left:1598px;top:822.5px" width="17" height="17" viewBox="0 0 17 17"><defs><linearGradient id="tg" x1="0" y1="0" x2="0" y2="1"><stop offset="0" stop-color="#8b8ff2"/><stop offset="1" stop-color="#5b5fe0"/></linearGradient></defs><circle cx="13.1" cy="4.4" r="1.9" fill="#7f86f0"/><circle cx="6.8" cy="2.8" r="2.4" fill="#8a8ff2"/><path d="M11 6.600000000000001h4.2a1 1 0 0 1 1 1v4.6a3.4 3.4 0 0 1-3.4 3.4H11z" fill="url(#tg)"/><path d="M3.2 6h8.6a1 1 0 0 1 1 1v5.2a4.4 4.4 0 0 1-4.4 4.4H7.6a4.4 4.4 0 0 1-4.4-4.4z" fill="#6a6fe4"/><rect x="0.9" y="5.800000000000001" width="8.8" height="8.8" rx="1.3" fill="#4248bd"/><path d="M3.1 8h4.4M5.3 8v4.7" stroke="#fff" stroke-width="1.3"/></svg>
<svg class="a" style="left:1639px;top:822px" width="17" height="18" viewBox="0 0 17 18"><path d="M0.8 17.2C1.6 10.2 6.6 3.4 15.4 0.8c.5 3.4-.2 7.2-3.200000000000001 10-2.4 2.2-5.4 2.8-8 2.8C3 14.8 1.6 16 .8 17.2z" fill="#9350b8"/><path d="M1.2 16.4C4.4 10.600000000000001 9 5.6 14.8 1.8M4 13c3.600000000000001-.6 6.6-2.4 8.6-5.4" stroke="#d9bcea" stroke-width="0.8" fill="none"/></svg>
<svg class="a" style="left:1559.5px;top:863px" width="16" height="12" viewBox="0 0 16 12"><path d="M7.4 0.2C5.2 1.8 3 2.4 0.6 2.6V12h13.8V2.6C12 2.4 9.600000000000001 1.8 7.4.2z" fill="#1a8ade"/><path d="M7.4.2V12H.6V2.6C3 2.4 5.2 1.8 7.4.2z" fill="#30b6f2"/><path d="M10.8 6.2l4 5.800000000000001H6.8z" fill="#fff"/><path d="M10.8 7.2l3.2 4.800000000000001H7.6z" fill="#f8c41a"/><rect x="10.4" y="9" width="0.8" height="2.4" fill="#111"/></svg>
<svg class="a" style="left:1601px;top:862.5px" width="12" height="12" viewBox="0 0 12 12"><rect x="2.7" y="0.9" width="6" height="4" fill="#fff" stroke="#000" stroke-width="1.2"/><rect x="4.1" y="2.1" width="1.2" height="1.4" fill="#000"/><rect x="6.1" y="2.1" width="1.2" height="1.4" fill="#000"/><rect x="1.5" y="4.9" width="8.4" height="9" rx="1" fill="#fff" stroke="#000" stroke-width="1.3"/></svg>
</body></html>
